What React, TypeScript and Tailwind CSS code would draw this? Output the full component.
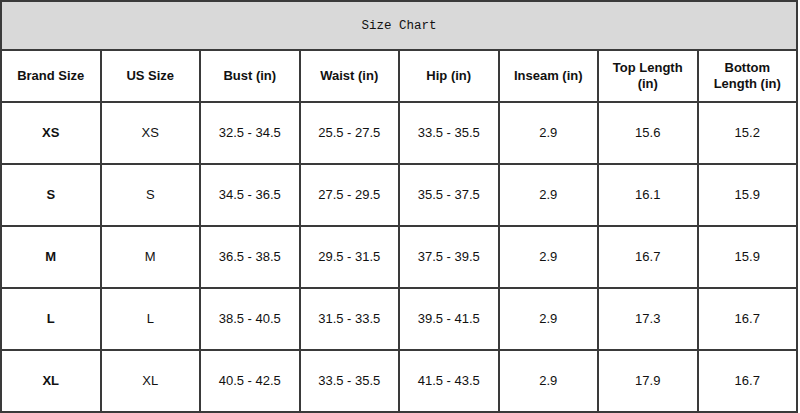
const headers = ['Brand Size', 'US Size', 'Bust (in)', 'Waist (in)', 'Hip (in)', 'Inseam (in)', 'Top Length (in)', 'Bottom Length (in)']

const rows = [
  ['XS', 'XS', '32.5 - 34.5', '25.5 - 27.5', '33.5 - 35.5', '2.9', '15.6', '15.2'],
  ['S', 'S', '34.5 - 36.5', '27.5 - 29.5', '35.5 - 37.5', '2.9', '16.1', '15.9'],
  ['M', 'M', '36.5 - 38.5', '29.5 - 31.5', '37.5 - 39.5', '2.9', '16.7', '15.9'],
  ['L', 'L', '38.5 - 40.5', '31.5 - 33.5', '39.5 - 41.5', '2.9', '17.3', '16.7'],
  ['XL', 'XL', '40.5 - 42.5', '33.5 - 35.5', '41.5 - 43.5', '2.9', '17.9', '16.7'],
]

export default function App() {
  return (
    <div className="w-[800px] h-[413px] bg-white font-['Liberation_Sans',Arial,sans-serif] text-[#111]">
      <table className="w-[798px] table-fixed border-collapse">
        <thead>
          <tr className="h-[49px]">
            <th
              colSpan={8}
              className="border-2 border-[#3a3a3a] bg-[#d9d9d9] pt-[2px] text-center font-normal text-[12.5px] font-['Liberation_Mono',monospace]"
            >
              Size Chart
            </th>
          </tr>
          <tr className="h-[52px]">
            {headers.map(h => (
              <th key={h} className="border-2 border-[#3a3a3a] px-2 text-center text-[13px] leading-[16px] font-bold">
                {h}
              </th>
            ))}
          </tr>
        </thead>
        <tbody>
          {rows.map(r => (
            <tr key={r[0]} className="h-[62px]">
              {r.map((c, i) => (
                <td
                  key={i}
                  className={`border-2 border-[#3a3a3a] text-center text-[13px] ${i === 0 ? 'font-bold' : 'font-normal'}`}
                >
                  {c}
                </td>
              ))}
            </tr>
          ))}
        </tbody>
      </table>
    </div>
  )
}
